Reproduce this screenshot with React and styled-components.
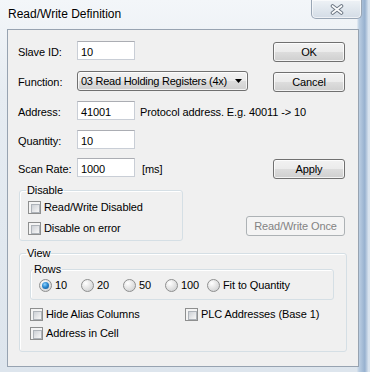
import React from 'react';
import styled, { createGlobalStyle } from 'styled-components';

const GlobalStyle = createGlobalStyle`
  html, body {
    margin: 0;
    padding: 0;
  }
  body {
    font-family: "Liberation Sans", Arial, sans-serif;
    font-size: 11px;
    letter-spacing: -0.1px;
    color: #000;
    background: #fff;
  }
  * {
    box-sizing: border-box;
  }
`;

const rowOptions = ['10', '20', '50', '100', 'Fit to Quantity'];

const CloseGlyph = () => (
  <svg width="14" height="11" viewBox="0 0 14 11">
    <path d="M2.5 2 L11.5 9 M11.5 2 L2.5 9" stroke="#6d7784" strokeWidth="3.6" strokeLinecap="round" />
    <path d="M2.5 2 L11.5 9 M11.5 2 L2.5 9" stroke="#fbfcfd" strokeWidth="1.7" strokeLinecap="round" />
  </svg>
);

const Check = ({ children }) => (
  <CheckRow>
    <CheckBox />
    <span>{children}</span>
  </CheckRow>
);

const App = () => {
  return (
    <>
      <GlobalStyle />
      <Window>
        <TitleBar>
          <Title>Read/Write Definition</Title>
          <CloseButton>
            <CloseGlyph />
          </CloseButton>
        </TitleBar>

        <Client>
          <FormGrid>
            <FieldLabel>Slave ID:</FieldLabel>
            <TextBox>10</TextBox>
            <PushButton>OK</PushButton>

            <FieldLabel>Function:</FieldLabel>
            <DropDown>
              <DropText>03 Read Holding Registers (4x)</DropText>
              <svg width="7" height="4" viewBox="0 0 7 4">
                <polygon points="0,0 7,0 3.5,4" fill="#000" />
              </svg>
            </DropDown>
            <PushButton>Cancel</PushButton>

            <FieldLabel>Address:</FieldLabel>
            <Field $wide>
              <TextBox>41001</TextBox>
              <Hint>Protocol address. E.g. 40011 -&gt; 10</Hint>
            </Field>

            <FieldLabel>Quantity:</FieldLabel>
            <Field $wide>
              <TextBox>10</TextBox>
            </Field>

            <FieldLabel>Scan Rate:</FieldLabel>
            <Field>
              <TextBox>1000</TextBox>
              <Hint $gap={7}>[ms]</Hint>
            </Field>
            <PushButton>Apply</PushButton>
          </FormGrid>

          <DisableRow>
            <GroupBox $width={164} $pad="4px 8px 5px 8px">
              <GroupTitle $shift={-2}>Disable</GroupTitle>
              <CheckList $gap={8}>
                <Check>Read/Write Disabled</Check>
                <Check>Disable on error</Check>
              </CheckList>
            </GroupBox>
            <PushButton $disabled $width={99}>Read/Write Once</PushButton>
          </DisableRow>

          <ViewGroup as="fieldset" $pad="3px 13px 11px 10px">
            <GroupTitle $shift={-4}>View</GroupTitle>
            <GroupBox $width={304} $pad="3px 8px 7px 8px">
              <GroupTitle $shift={-6}>Rows</GroupTitle>
              <RadioRow>
                {rowOptions.map((opt, i) => (
                  <RadioItem key={opt}>
                    <Radio $checked={i === 0} />
                    <span>{opt}</span>
                  </RadioItem>
                ))}
              </RadioRow>
            </GroupBox>
            <CheckGrid>
              <Check>Hide Alias Columns</Check>
              <Check>PLC Addresses (Base 1)</Check>
              <Check>Address in Cell</Check>
            </CheckGrid>
          </ViewGroup>
        </Client>
      </Window>
    </>
  );
};

export default App;

const Window = styled.div`
  width: 370px;
  height: 372px;
  display: flex;
  flex-direction: column;
  background:
    linear-gradient(to right, transparent 96.4%, #bccfe3 97%, #97b1cf 98.6%, #d9e4ef 99.6%),
    linear-gradient(to bottom, #f3f6f9 0%, #e6ecf2 25%, #dde5ed 100%);
`;

const TitleBar = styled.div`
  height: 29px;
  flex-shrink: 0;
  display: flex;
  justify-content: space-between;
  align-items: flex-start;
  padding-left: 8px;
`;

const Title = styled.div`
  margin-top: 7px;
  font-size: 12px;
  line-height: 15px;
  letter-spacing: 0;
  color: #000;
  text-shadow: 0 0 6px #fff, 0 0 3px #fff;
`;

const CloseButton = styled.div`
  width: 51px;
  height: 19px;
  margin-right: 8px;
  display: flex;
  align-items: center;
  justify-content: center;
  border: 1px solid #99a6b5;
  border-top: none;
  border-radius: 0 0 5px 5px;
  background: linear-gradient(to bottom, #eef2f6, #dfe6ed 55%, #d3dce6);
  box-shadow: inset 0 0 0 1px rgba(255, 255, 255, 0.6);
`;

const Client = styled.div`
  flex: 1;
  margin: 0 11px 5px 7px;
  border: 1px solid #97a3b1;
  background: #f0f0f0;
  padding: 11px 11px 0 10px;
  display: flex;
  flex-direction: column;
`;

const FormGrid = styled.div`
  display: grid;
  grid-template-columns: 59px 1fr 72px;
  grid-template-rows: 30px 30px 29px 28px 21px;
  align-items: start;
  margin-right: 2px;
`;

const FieldLabel = styled.div`
  padding-top: 5px;
  line-height: 13px;
  white-space: nowrap;
`;

const Field = styled.div`
  display: flex;
  align-items: flex-start;
  grid-column: ${(props) => (props.$wide ? 'span 2' : 'auto')};
`;

const TextBox = styled.div`
  width: 58px;
  height: 19px;
  padding: 4px 0 0 3px;
  line-height: 13px;
  background: #fff;
  border: 1px solid #c9ced6;
  border-top-color: #abadb3;
`;

const Hint = styled.div`
  margin-left: ${(props) => props.$gap || 5}px;
  padding-top: 5px;
  line-height: 13px;
  white-space: nowrap;
`;

const PushButton = styled.div`
  width: ${(props) => props.$width || 72}px;
  height: 20px;
  margin-top: 1px;
  display: flex;
  align-items: center;
  justify-content: center;
  line-height: 13px;
  border-radius: 3px;
  border: 1px solid ${(props) => (props.$disabled ? '#adb2b5' : '#707070')};
  color: ${(props) => (props.$disabled ? '#838383' : '#000')};
  background: ${(props) =>
    props.$disabled
      ? '#f4f4f4'
      : 'linear-gradient(to bottom, #f2f2f2 0%, #ebebeb 50%, #dddddd 50%, #cfcfcf 100%)'};
  box-shadow: ${(props) => (props.$disabled ? 'none' : 'inset 0 0 0 1px rgba(255, 255, 255, 0.75)')};
`;

const DropDown = styled(PushButton)`
  width: 171px;
  justify-content: space-between;
  padding: 0 5px 0 3px;
  margin-top: 0;
  white-space: nowrap;
`;

const DropText = styled.span`
  letter-spacing: -0.25px;
`;

const DisableRow = styled.div`
  display: flex;
  justify-content: space-between;
  align-items: flex-end;
  margin: 5px 2px 0 1px;

  & > ${PushButton} {
    margin-bottom: 5px;
  }
`;

const GroupBox = styled.fieldset`
  margin: 0;
  min-width: 0;
  width: ${(props) => (props.$width ? `${props.$width}px` : 'auto')};
  padding: ${(props) => props.$pad};
  border: 1px solid #d5dfe5;
  border-radius: 3px;
  box-shadow: inset 1px 1px 0 #fff;
`;

const ViewGroup = styled(GroupBox)`
  margin: 6px 0 0 1px;
`;

const GroupTitle = styled.legend`
  margin-left: ${(props) => props.$shift || 0}px;
  padding: 0 1px;
  line-height: 13px;
  font-size: 11px;
`;

const CheckList = styled.div`
  display: flex;
  flex-direction: column;
  gap: ${(props) => props.$gap}px;
`;

const CheckGrid = styled.div`
  display: grid;
  grid-template-columns: 155px auto;
  row-gap: 6px;
  margin-top: 8px;
`;

const CheckRow = styled.div`
  display: flex;
  align-items: center;
  gap: 3px;
  height: 13px;
  line-height: 13px;
  white-space: nowrap;
`;

const CheckBox = styled.div`
  width: 13px;
  height: 13px;
  flex-shrink: 0;
  padding: 2px;
  border: 1px solid #8e8f8f;
  background: #f4f4f4;

  &::before {
    content: '';
    display: block;
    width: 100%;
    height: 100%;
    border: 1px solid #aeb3b9;
    background: linear-gradient(135deg, #cdd1d6 0%, #e7e8ea 60%, #f7f7f7 100%);
  }
`;

const RadioRow = styled.div`
  display: grid;
  grid-template-columns: 42px 42px 42px 42px auto;
  height: 13px;
`;

const RadioItem = styled.div`
  display: flex;
  align-items: center;
  gap: 3px;
  line-height: 13px;
  white-space: nowrap;
`;

const Radio = styled.div`
  width: 13px;
  height: 13px;
  flex-shrink: 0;
  border-radius: 50%;
  border: 1px solid #8e8f8f;
  background: radial-gradient(circle at 35% 30%, #ffffff 0%, #e6e6e6 45%, #c9cbcd 100%);
  display: flex;
  align-items: center;
  justify-content: center;

  &::after {
    content: '';
    display: ${(props) => (props.$checked ? 'block' : 'none')};
    width: 7px;
    height: 7px;
    border-radius: 50%;
    background: radial-gradient(circle at 40% 35%, #8fd3ff 0%, #2b88cf 45%, #0f4f8c 100%);
  }
`;
